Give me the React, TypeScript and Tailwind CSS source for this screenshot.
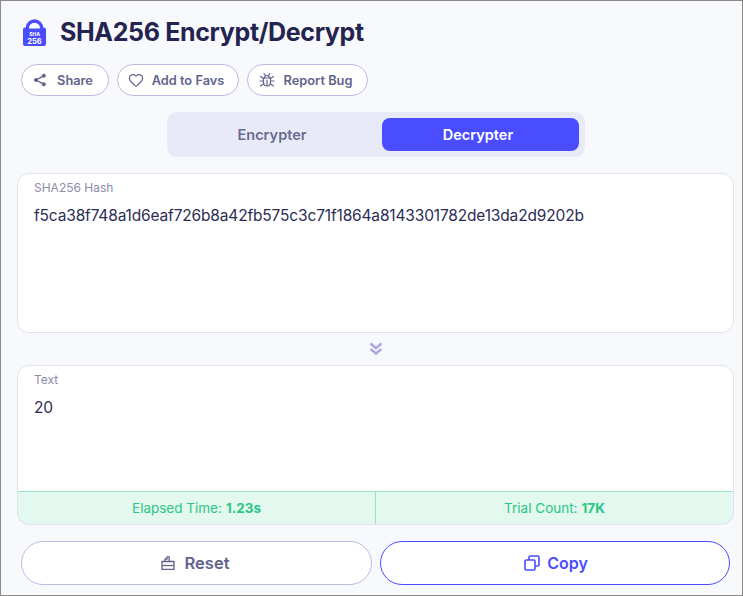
import React from 'react';
import { Heart } from 'lucide-react';

const Logo = () => (
  <svg width="25" height="28" viewBox="0 0 25 28" className="shrink-0">
    <path d="M5.5 11V9a7 7 0 0 1 14 0v2" fill="none" stroke="#4a4dff" strokeWidth="3.4" />
    <path d="M3 8.5h19a2 2 0 0 1 2 2V25a2 2 0 0 1-2 2H3a2 2 0 0 1-2-2V10.5a2 2 0 0 1 2-2z" fill="#4a4dff" />
    <path d="M7 9.5a5.5 5.5 0 0 1 11 0z" fill="#f8f9fc" />
    <text x="12.5" y="16.5" textAnchor="middle" fontSize="5" fontWeight="700" fill="#fff" fontFamily="Inter, sans-serif">SHA</text>
    <text x="12.5" y="24.5" textAnchor="middle" fontSize="7.5" fontWeight="700" fill="#fff" fontFamily="Inter, sans-serif">256</text>
  </svg>
);

const ShareIcon = () => (
  <svg width="14" height="14" viewBox="0 0 14 14" fill="currentColor" stroke="currentColor" strokeWidth="1.4">
    <path d="M10.8 2.8 3 7l7.8 4.2" fill="none" />
    <circle cx="10.8" cy="2.8" r="1.3" />
    <circle cx="3" cy="7" r="1.3" />
    <circle cx="10.8" cy="11.2" r="1.3" />
  </svg>
);

const BugIcon = () => (
  <svg width="16" height="16" viewBox="0 0 16 16" fill="none" stroke="currentColor" strokeWidth="1.2" strokeLinecap="round">
    <path d="M4.5 6h7v4.5a3.5 3.5 0 0 1-7 0z" />
    <path d="M5.5 6a2.5 2.5 0 0 1 5 0" />
    <path d="M5 1.5l1.4 2M11 1.5 9.6 3.5M8 8v5.5" />
    <path d="M1.5 4.5 4.5 6.5M14.5 4.5l-3 2M1 9h3.5M15 9h-3.5M1.5 14l3.2-2.2M14.5 14l-3.2-2.2" />
  </svg>
);

const BrushIcon = () => (
  <svg width="14" height="14" viewBox="0 0 14 14" fill="none" stroke="currentColor" strokeWidth="1.3">
    <path d="M1 5.5h12v8H1z" />
    <path d="M1 9.5h12" />
    <path d="M4 5.5V3h2V.8h2.2v4.7" />
  </svg>
);

const CopyIcon = () => (
  <svg width="16" height="16" viewBox="0 0 16 16" fill="none" stroke="currentColor" strokeWidth="1.6">
    <rect x="1" y="5" width="10" height="10" rx="1.2" />
    <path d="M5 5V2.2A1.2 1.2 0 0 1 6.2 1h7.6A1.2 1.2 0 0 1 15 2.2v7.6a1.2 1.2 0 0 1-1.2 1.2H11" />
  </svg>
);

const ChevronsIcon = () => (
  <svg width="14" height="14" viewBox="0 0 14 14" fill="none" stroke="#a9abdc" strokeWidth="2.6">
    <path d="M1.5 1.5 7 6l5.5-4.5" />
    <path d="M1.5 7 7 11.5 12.5 7" />
  </svg>
);

const ActionButton = ({ icon, label, width, gap }: { icon: React.ReactNode; label: string; width: string; gap: string }) => (
  <button className={`${width} ${gap} h-8 pr-1 flex items-center justify-center rounded-full border border-[#bcbde3] bg-white text-[12.8px] font-semibold text-[#62648a]`}>
    {icon}
    <span className="pt-px">{label}</span>
  </button>
);

export default function App() {
  return (
    <div className="w-[743px] h-[596px] border border-[#8a8a8a] bg-[#f8f9fc] font-['Inter',sans-serif] flex flex-col overflow-hidden">
      <div className="flex items-center gap-[13px] pl-[21px] pt-[16px] h-[47px]">
        <Logo />
        <h1 className="text-[25px] leading-none font-bold text-[#23244f] tracking-[-0.35px]">SHA256 Encrypt/Decrypt</h1>
      </div>

      <div className="flex gap-2 pl-5 mt-4">
        <ActionButton width="w-[88px]" gap="gap-[10px]" label="Share" icon={<ShareIcon />} />
        <ActionButton width="w-[122px]" gap="gap-[8px]" label="Add to Favs" icon={<Heart size={16} strokeWidth={1.8} />} />
        <ActionButton width="w-[121px]" gap="gap-[9px]" label="Report Bug" icon={<BugIcon />} />
      </div>

      <div className="self-center ml-2 mt-4 w-[418px] h-[45px] rounded-[10px] bg-[#e9eaf8] flex items-center px-[6px] gap-[3px]">
        <div className="flex-1 pr-[7px] pt-px text-center text-[14.5px] font-semibold text-[#696b90]">Encrypter</div>
        <div className="w-[197px] h-[33px] pr-1 pt-px flex items-center justify-center rounded-lg bg-[#4a4dff] text-[14.5px] font-semibold text-white">Decrypter</div>
      </div>

      <div className="mx-4 mt-4 h-[160px] w-[717px] rounded-xl border border-[#e1e3f1] bg-white pl-4 pt-[6px]">
        <div className="text-xs leading-[15px] text-[#8a8ca8]">SHA256 Hash</div>
        <div className="mt-[9px] text-[15.5px] tracking-[-0.16px] leading-6 text-[#2c2d55]">f5ca38f748a1d6eaf726b8a42fb575c3c71f1864a8143301782de13da2d9202b</div>
      </div>

      <div className="h-8 pl-2 flex items-center justify-center">
        <ChevronsIcon />
      </div>

      <div className="mx-4 h-[160px] w-[717px] rounded-xl border border-[#e1e3f1] bg-white flex flex-col overflow-hidden">
        <div className="flex-1 pl-4 pt-[6px]">
          <div className="text-xs leading-[15px] text-[#8a8ca8]">Text</div>
          <div className="mt-[9px] text-[15.5px] tracking-[-0.16px] leading-6 text-[#2c2d55]">20</div>
        </div>
        <div className="h-[34px] -mx-px -mb-px flex border border-[#95e5bd] rounded-b-xl bg-[#e3f9ef] text-[13.5px] text-[#2cc684]">
          <div className="w-[358px] flex items-center justify-center gap-1 border-r border-[#95e5bd]">
            Elapsed Time: <b className="font-bold">1.23s</b>
          </div>
          <div className="flex-1 flex items-center justify-center gap-1">
            Trial Count: <b className="font-bold">17K</b>
          </div>
        </div>
      </div>

      <div className="flex gap-2 pl-5 mt-4">
        <button className="w-[351px] h-11 pr-[3px] flex items-center justify-center gap-[10px] rounded-full border border-[#bcbde3] bg-white text-[16.5px] font-semibold text-[#62648a]">
          <BrushIcon />
          Reset
        </button>
        <button className="w-[350px] h-11 pl-[2px] flex items-center justify-center gap-[7px] rounded-full border border-[#4a4dff] bg-white text-[16px] font-semibold text-[#4a4dff]">
          <CopyIcon />
          Copy
        </button>
      </div>
    </div>
  );
}
